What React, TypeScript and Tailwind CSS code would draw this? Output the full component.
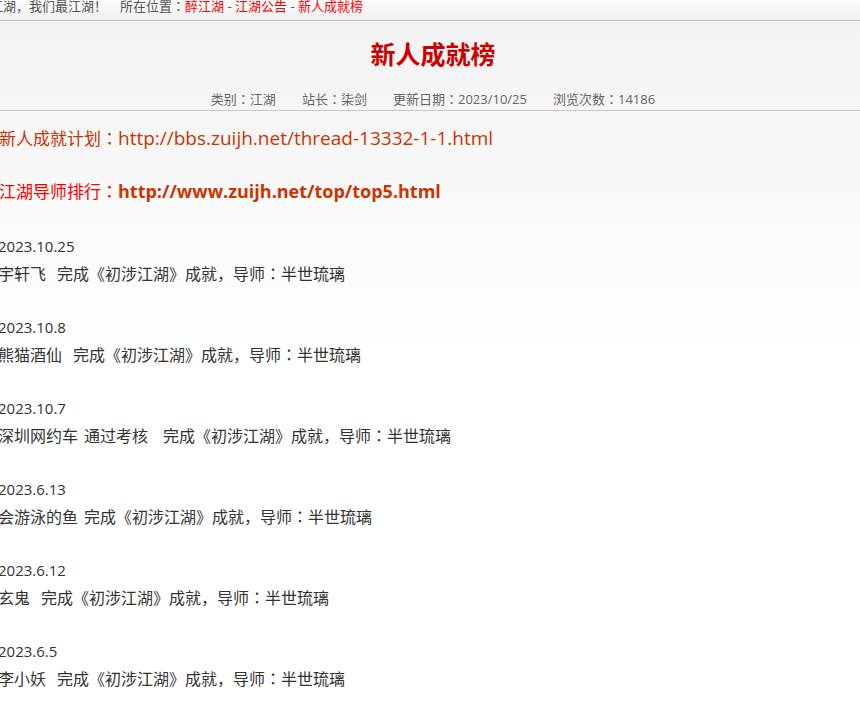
const font = "font-['Open_Sans','Noto_Sans_CJK_SC',sans-serif]";

// centred full-width colon, as the reference's font draws it
function Colon() {
  return <span className="font-['Noto_Sans_CJK_JP',sans-serif]">：</span>;
}

interface Entry {
  date: string;
  parts: { text: string; gap: number }[];
}

const entries: Entry[] = [
  { date: '2023.10.25', parts: [{ text: '宇轩飞', gap: 11 }] },
  { date: '2023.10.8', parts: [{ text: '熊猫酒仙', gap: 11 }] },
  { date: '2023.10.7', parts: [{ text: '深圳网约车', gap: 6 }, { text: '通过考核', gap: 15 }] },
  { date: '2023.6.13', parts: [{ text: '会游泳的鱼', gap: 6 }] },
  { date: '2023.6.12', parts: [{ text: '玄鬼', gap: 11 }] },
  { date: '2023.6.5', parts: [{ text: '李小妖', gap: 11 }] },
];

export default function App() {
  return (
    <div className={`${font} min-h-[719px] w-[860px] overflow-hidden bg-gradient-to-b from-[#f2f2f2] via-white to-white`}>
      <div className="h-[21px] overflow-hidden border-b border-[#c4c4c4] bg-gradient-to-b from-[#fbfbfb] to-[#f0f0f0]">
        <div className="ml-[-23px] whitespace-nowrap text-[13px] leading-[12px] text-[#555]">
          醉江湖，我们最江湖！<span className="inline-block w-[13px]" />所在位置<Colon />
          <span className="text-[#ff0000]">醉江湖</span> - <span className="text-[#ff0000]">江湖公告</span> -{' '}
          <span className="text-[#ff0000]">新人成就榜</span>
        </div>
      </div>

      <div className="border-b border-[#c8c8c8] pl-[6px] text-center">
        <h1 className="mt-[13px] text-[25px] font-bold leading-[40px] text-[#cc0000]">新人成就榜</h1>
        <div className="mt-[15px] flex justify-center gap-[26px] pb-[1px] text-[13px] leading-[20px] text-[#666]">
          <span>类别<Colon />江湖</span>
          <span>站长<Colon />柒剑</span>
          <span>更新日期<Colon />2023/10/25</span>
          <span>浏览次数<Colon />14186</span>
        </div>
      </div>

      <div className="pt-[13px] text-[16px] leading-[27px] text-[#333] whitespace-nowrap">
        <div className="ml-[-1px] h-[27px] text-[17px] text-[#cc3300]">
          新人成就计划<Colon />
          <span className="text-[19px]">http://bbs.zuijh.net/thread-13332-1-1.html</span>
        </div>
        <div className="h-[26px]" />
        <div className="ml-[-1px] h-[27px] text-[17px]">
          <span className="text-[#ff0000]">
            江湖导师排行<Colon />
          </span>
          <span className="text-[18px] font-bold text-[#cc3300]">http://www.zuijh.net/top/top5.html</span>
        </div>
        <div className="h-[29px]" />
        {entries.map((e) => (
          <div key={e.date} className="ml-[-2px]">
            <div className="h-[27px] text-[15px]">{e.date}</div>
            <div className="h-[27px]">
              {e.parts.map((p) => (
                <span key={p.text}>
                  {p.text}
                  <span className="inline-block" style={{ width: p.gap }} />
                </span>
              ))}
              完成《初涉江湖》成就，导师<Colon />半世琉璃
            </div>
            <div className="h-[27px]" />
          </div>
        ))}
      </div>
    </div>
  );
}
